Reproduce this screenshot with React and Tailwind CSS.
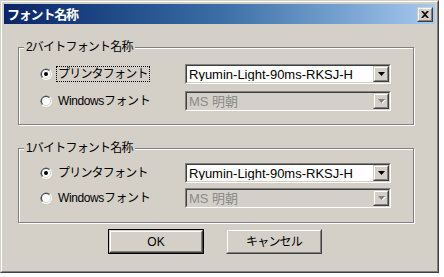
import React from "react";

const FONT = { fontFamily: '"Liberation Sans", "Noto Sans CJK JP", sans-serif' };

function Radio({ checked }) {
  return (
    <svg width="12" height="12" viewBox="0 0 12 12" className="shrink-0">
      <circle cx="6" cy="6" r="6" fill="#fff" />
      <path d="M1.76 10.24 A6 6 0 0 1 10.24 1.76 Z" fill="#808080" />
      <circle cx="6" cy="6" r="5" fill="#d4d0c8" />
      <path d="M2.46 9.54 A5 5 0 0 1 9.54 2.46 Z" fill="#404040" />
      <circle cx="6" cy="6" r="4" fill="#fff" />
      {checked && <circle cx="6" cy="6" r="2" fill="#000" />}
    </svg>
  );
}

function Raised({ className = "", children }) {
  return (
    <div className={"shrink-0 border border-t-[#d4d0c8] border-l-[#d4d0c8] border-b-[#404040] border-r-[#404040] " + className}>
      <div className="w-full h-full border border-t-white border-l-white border-b-[#808080] border-r-[#808080] bg-[#d4d0c8] flex items-center justify-center">
        {children}
      </div>
    </div>
  );
}

function Combo({ text, disabled }) {
  return (
    <div className="shrink-0 w-[206px] h-[20px] border border-t-[#808080] border-l-[#808080] border-b-white border-r-white">
      <div className={"w-full h-full border border-t-[#404040] border-l-[#404040] border-b-[#d4d0c8] border-r-[#d4d0c8] flex items-center " + (disabled ? "bg-[#d4d0c8]" : "bg-white")}>
        <span className={"flex-1 min-w-0 pl-[2px] text-[13px] leading-none whitespace-nowrap overflow-hidden " + (disabled ? "text-[#8a8a8a]" : "text-black")}>{text}</span>
        <Raised className="w-[16px] h-[16px]">
          <svg width="7" height="4" viewBox="0 0 7 4" overflow="visible">
            {disabled && <path d="M1 1 H8 L4.5 4.5 Z" fill="#fff" />}
            <path d="M0 0 H7 L3.5 4 Z" fill={disabled ? "#808080" : "#000"} />
          </svg>
        </Raised>
      </div>
    </div>
  );
}

function Group({ title, focus, className = "", rowsClass }) {
  return (
    <div className={"relative w-[396px] border border-[#808080] shadow-[inset_1px_1px_0_#fff,1px_1px_0_#fff] " + className}>
      <span className="absolute left-[5px] top-[-8px] bg-[#d4d0c8] px-[2px] text-[12px] leading-[14px] tracking-[-0.8px] text-black">{title}</span>
      <div className={"flex flex-col pl-[21px] " + rowsClass}>
        <div className="flex items-center h-[20px]">
          <Radio checked />
          <div className="w-[128px] shrink-0 ml-[5px] flex">
            <span className={"px-[1px] text-[12px] leading-[14px] tracking-[-0.8px] " + (focus ? "outline outline-1 outline-dotted outline-black" : "")}>プリンタフォント</span>
          </div>
          <Combo text="Ryumin-Light-90ms-RKSJ-H" />
        </div>
        <div className="flex items-center h-[20px]">
          <Radio />
          <div className="w-[128px] shrink-0 ml-[5px] flex">
            <span className="px-[1px] text-[12px] leading-[14px] tracking-[-0.4px]">Windowsフォント</span>
          </div>
          <Combo text="MS 明朝" disabled />
        </div>
      </div>
    </div>
  );
}

export default function App() {
  return (
    <div className="w-[444px] h-[277px] bg-white">
      <div style={FONT} className="w-[439px] h-[273px] border border-t-[#d4d0c8] border-l-[#d4d0c8] border-b-[#404040] border-r-[#404040] bg-[#d4d0c8]">
        <div className="w-full h-full border border-t-white border-l-white border-b-[#808080] border-r-[#808080] p-[2px] flex flex-col">
          <div className="h-[20px] flex items-center justify-between pl-[3px] pr-[2px] bg-gradient-to-r from-[#0a246a] via-[#3a6ea5] to-[#a6caf0]">
            <span className="text-white font-bold text-[13px] leading-none tracking-[-1.2px]">フォント名称</span>
            <Raised className="w-[16px] h-[15px]">
              <svg width="8" height="7" viewBox="0 0 8 7">
                <path d="M0 0 H2 L4 2 L6 0 H8 L5 3.5 L8 7 H6 L4 5 L2 7 H0 L3 3.5 Z" fill="#000" />
              </svg>
            </Raised>
          </div>
          <div className="flex flex-col pl-[14px] pt-[23px]">
            <Group title="2バイトフォント名称" focus className="h-[78px]" rowsClass="pt-[16px] gap-[7px]" />
            <Group title="1バイトフォント名称" className="h-[75px] mt-[23px]" rowsClass="pt-[14px] gap-[5px]" />
            <div className="flex gap-[22px] mt-[6px] pl-[90px]">
              <div className="w-[96px] h-[25px] border border-black">
                <Raised className="w-full h-full">
                  <span className="text-[12px] leading-none">OK</span>
                </Raised>
              </div>
              <Raised className="w-[96px] h-[25px]">
                <span className="text-[12px] leading-none tracking-[-0.8px]">キャンセル</span>
              </Raised>
            </div>
          </div>
        </div>
      </div>
    </div>
  );
}
